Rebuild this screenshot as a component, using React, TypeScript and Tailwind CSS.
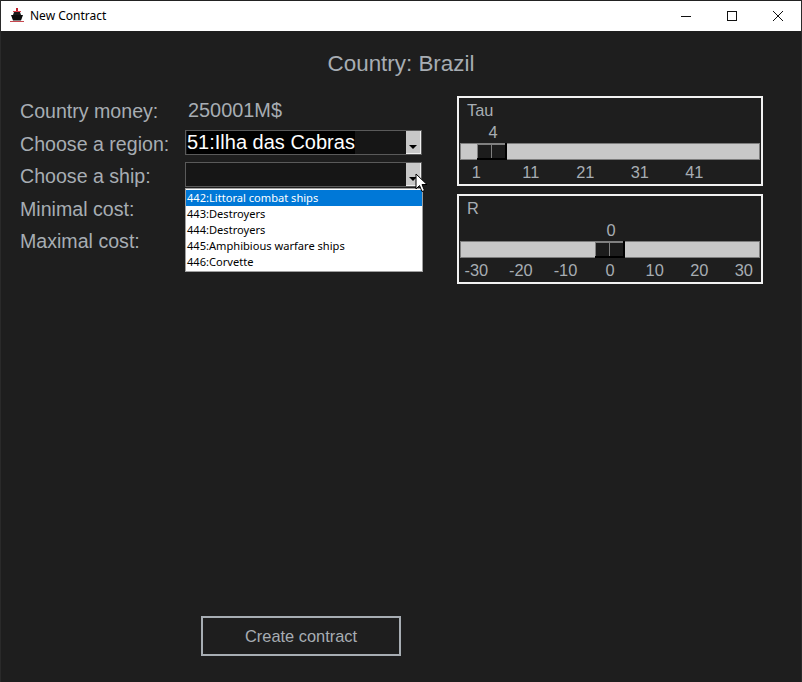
import React from "react";

const ShipIcon = () => (
  <svg width="16" height="16" viewBox="0 0 16 16">
    <path d="M7 0h2v3H7z" fill="#c0202c" />
    <path d="M4 3h8v1H4z" fill="#d8434e" />
    <path d="M5 4h6l1 3H4z" fill="#1a1a1a" />
    <path d="M2 7h12l-2 5.5H4z" fill="#0d0d0d" />
    <rect x="1" y="13" width="14" height="1" fill="#c8474f" />
  </svg>
);

const WindowControls = () => (
  <div className="flex h-full">
    <div className="w-[46px] flex items-center justify-center">
      <svg width="10" height="10" viewBox="0 0 10 10">
        <path d="M0 5.5h10" stroke="#111" />
      </svg>
    </div>
    <div className="w-[46px] flex items-center justify-center">
      <svg width="10" height="10" viewBox="0 0 10 10">
        <rect x="0.5" y="0.5" width="9" height="9" fill="none" stroke="#111" />
      </svg>
    </div>
    <div className="w-[46px] flex items-center justify-center">
      <svg width="10" height="10" viewBox="0 0 10 10">
        <path d="M0 0l10 10M10 0L0 10" stroke="#111" />
      </svg>
    </div>
  </div>
);

const ComboArrow = () => (
  <div className="w-[15px] h-[23px] bg-[#c8c8c8] border-r border-b border-r-[#f0f0f0] border-b-[#f0f0f0] flex items-end justify-center pb-[4px]">
    <div className="w-0 h-0 border-l-[4px] border-r-[4px] border-t-[4px] border-l-transparent border-r-transparent border-t-black" />
  </div>
);

const Combo = ({ value }: { value?: string }) => (
  <div className="h-[25px] w-[237px] -mt-[4px] border border-[#5a5a5a] flex items-center justify-between bg-[#161616] pl-[1px]">
    <span className="bg-black text-white text-[20px] leading-[23px] h-[23px]">{value}</span>
    <ComboArrow />
  </div>
);

const Thumb = () => (
  <div className="flex h-[17px] w-[30px] bg-[#808080] border-b-2 border-r-2 border-b-black border-r-black pt-[2px] pl-[1px] gap-[1px]">
    <div className="flex-1 bg-[#1c1c1c]" />
    <div className="flex-1 bg-[#1c1c1c]" />
  </div>
);

type SliderProps = {
  title: string;
  value: string;
  valueOffset: number;
  thumbOffset: number;
  ticks: string[];
  tickWidth: string;
  ticksClass: string;
};

const Slider = (props: SliderProps) => (
  <div className="h-[90px] w-[306px] border-2 border-[#f2f2f2] px-[1px] text-[#a7adb3] text-[16.4px] leading-[18px]">
    <div className="pl-[7px] pt-[3px] h-[22px]">{props.title}</div>
    <div className="h-[23px] pt-[3px]">
      <div className="w-[20px] text-center" style={{ marginLeft: props.valueOffset }}>
        {props.value}
      </div>
    </div>
    <div className="h-[17px] w-[300px] bg-[#c8c8c8] border border-[#7d7d7d]">
      <div className="-mt-[1px]" style={{ marginLeft: props.thumbOffset }}>
        <Thumb />
      </div>
    </div>
    <div className={`flex pt-[3px] ${props.ticksClass}`}>
      {props.ticks.map((t) => (
        <div key={t} className={`${props.tickWidth} text-center shrink-0`}>
          {t}
        </div>
      ))}
    </div>
  </div>
);

const ships = [
  "442:Littoral combat ships",
  "443:Destroyers",
  "444:Destroyers",
  "445:Amphibious warfare ships",
  "446:Corvette",
];

const Row = ({ label, children }: { label: string; children?: React.ReactNode }) => (
  <div className="h-[32.5px] flex items-center">
    <div className="w-[165px] shrink-0">{label}</div>
    {children}
  </div>
);

export default function App() {
  return (
    <div className="w-[802px] h-[682px] flex flex-col bg-[#1e1e1e] border-x border-[#2a2a2a] overflow-hidden font-['Liberation_Sans',Arial,sans-serif]">
      <div className="h-[31px] shrink-0 bg-white border-t border-[#222222] flex items-center justify-between">
        <div className="flex items-center pl-[8px] gap-[5px] text-[12px] text-black font-['Noto_Sans',sans-serif]">
          <ShipIcon />
          <span>New Contract</span>
        </div>
        <WindowControls />
      </div>

      <div className="flex-1 flex flex-col">
        <div className="text-center text-[22.4px] leading-[26px] text-[#a7adb3] pt-[20px]">Country: Brazil</div>

        <div className="flex pt-[19px] pl-[19px] gap-[35px]">
          <div className="w-[402px] text-[19.6px] text-[#a7adb3] relative -mt-[0.5px]">
            <Row label="Country money:">
              <span className="ml-[3px] -mt-[1px] text-[19.9px]">250001M$</span>
            </Row>
            <Row label="Choose a region:">
              <Combo value="51:Ilha das Cobras" />
            </Row>
            <Row label="Choose a ship:">
              <Combo />
            </Row>
            <Row label="Minimal cost:" />
            <Row label="Maximal cost:" />

            <div className="absolute left-[165px] top-[92.5px] w-[238px] h-[84px] bg-white border border-[#a0a0a0] pt-[1px] text-[11.1px] leading-[16px] text-black font-['Noto_Sans',sans-serif]">
              {ships.map((s, i) => (
                <div key={s} className={i === 0 ? "bg-[#0078d7] text-white pl-[1px]" : "pl-[1px]"}>
                  {s}
                </div>
              ))}
            </div>

            <svg className="absolute left-[395px] top-[77px]" width="13" height="20" viewBox="0 0 13 20">
              <path d="M1 1v15l3.5-3.5 2.5 6 2.5-1-2.5-6h5z" fill="#fff" stroke="#000" />
            </svg>
          </div>

          <div className="flex flex-col gap-[8px]">
            <Slider
              title="Tau"
              value="4"
              valueOffset={23}
              thumbOffset={16}
              ticks={["1", "11", "21", "31", "41"]}
              tickWidth="w-[54.5px]"
              ticksClass="-ml-[11px]"
            />
            <Slider
              title="R"
              value="0"
              valueOffset={141}
              thumbOffset={134}
              ticks={["-30", "-20", "-10", "0", "10", "20", "30"]}
              tickWidth="w-[44.6px]"
              ticksClass="-ml-[6px]"
            />
          </div>
        </div>

        <div className="flex-1" />

        <div className="pb-[26px] pl-[200px]">
          <div className="w-[200px] h-[40px] border-2 border-[#a7adb3] flex items-center justify-center text-[16.4px] text-[#a7adb3]">
            Create contract
          </div>
        </div>
      </div>
    </div>
  );
}
